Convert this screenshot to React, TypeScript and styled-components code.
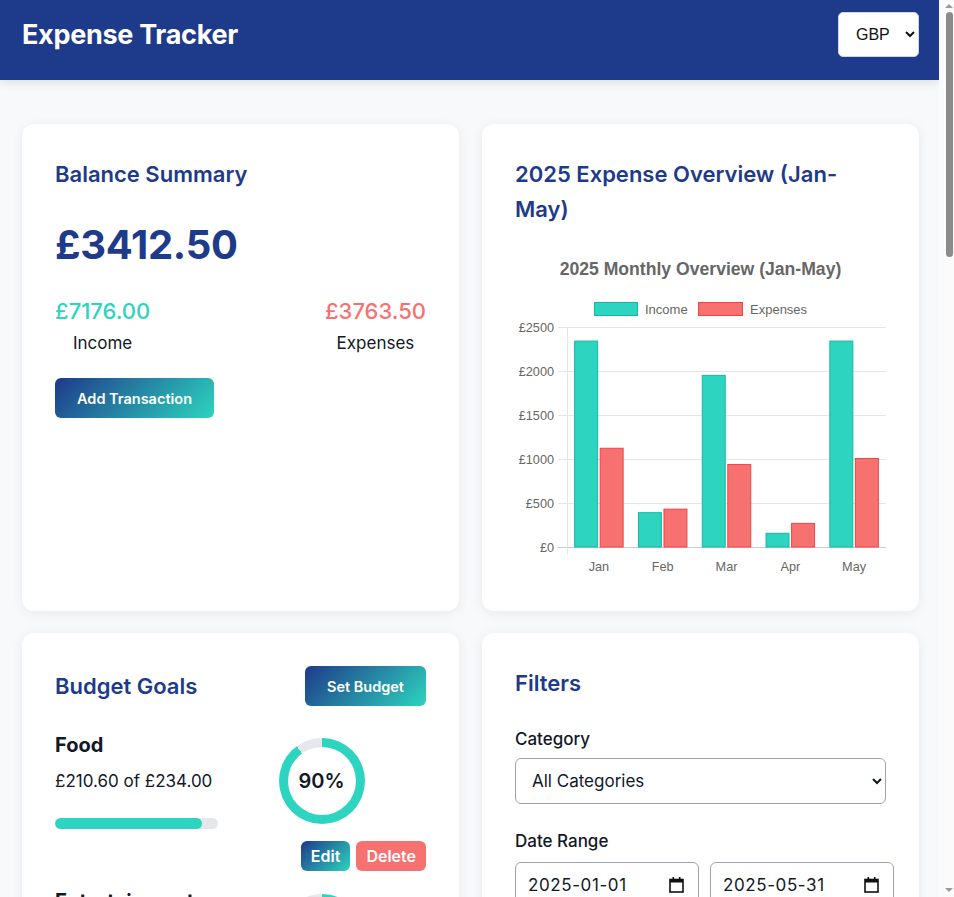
import React from 'react';
import styled, { createGlobalStyle } from 'styled-components';

const GlobalStyle = createGlobalStyle`
  * {
    box-sizing: border-box;
  }
  body {
    margin: 0;
    font-family: Inter, 'Noto Sans', sans-serif;
    background: #f8f9fb;
    color: #111827;
  }
`;

const Page = styled.div`
  margin-right: 15px;
`;

/* the reference shows a classic scrollbar; the capture hides native ones */
const ScrollBar = styled.div`
  position: fixed;
  top: 0;
  right: 0;
  width: 15px;
  height: 100vh;
  background: #fbfbfb;
`;

const ScrollThumb = styled.div`
  position: absolute;
  top: 12px;
  left: 7px;
  width: 7px;
  height: 245px;
  border-radius: 4px;
  background: #8b8b8b;
`;

const ScrollArrow = styled.div<{ $down?: boolean }>`
  position: absolute;
  left: 6px;
  ${(p) => (p.$down ? 'bottom: 5px;' : 'top: 4px;')}
  width: 0;
  height: 0;
  border-left: 4px solid transparent;
  border-right: 4px solid transparent;
  ${(p) => (p.$down ? 'border-top: 4px solid #9a9a9a;' : 'border-bottom: 4px solid #9a9a9a;')}
`;

const Header = styled.header`
  background: #1e3a8a;
  height: 80px;
  padding: 12px 20px 23px 22px;
  display: flex;
  justify-content: space-between;
  align-items: center;
  box-shadow: 0 2px 10px rgba(0, 0, 0, 0.12);
`;

const Logo = styled.h1`
  margin: 0;
  color: #ffffff;
  font-size: 27px;
  font-weight: 700;
  letter-spacing: -0.3px;
`;

const CurrencySelect = styled.select`
  height: 45px;
  width: 81px;
  padding: 0 10px 0 13px;
  border: 1px solid #d1d5db;
  border-radius: 5px;
  background: #ffffff;
  font-family: 'Liberation Sans', Arial, sans-serif;
  font-size: 16px;
  color: #111;
`;

const Main = styled.main`
  display: grid;
  grid-template-columns: minmax(0, 1fr) minmax(0, 1fr);
  column-gap: 23px;
  row-gap: 22px;
  padding: 44px 20px 48px 22px;
  align-items: start;
  align-content: start;
  min-height: 3116px;
`;

const Card = styled.section<{ $span?: boolean; $height?: number }>`
  background: #ffffff;
  border-radius: 12px;
  box-shadow: 0 2px 12px rgba(15, 23, 42, 0.07);
  padding: 33px;
  grid-column: ${(p) => (p.$span ? '1 / -1' : 'auto')};
  min-height: ${(p) => (p.$height ? `${p.$height}px` : 'auto')};
`;

const CardTitle = styled.h2`
  margin: 0;
  color: #1e3a8a;
  font-size: 22px;
  font-weight: 600;
  line-height: 35px;
`;

const Balance = styled.div`
  margin: 18px 0 0;
  color: #1e3a8a;
  font-size: 40px;
  font-weight: 700;
  line-height: 70px;
  letter-spacing: -0.3px;
`;

const Totals = styled.div`
  display: flex;
  justify-content: space-between;
  margin-top: 16px;
`;

const TotalBlock = styled.div`
  text-align: center;
`;

const TotalAmount = styled.div<{ $color: string }>`
  color: ${(p) => p.$color};
  font-size: 22px;
  font-weight: 500;
  line-height: 30px;
`;

const TotalLabel = styled.div`
  font-size: 17px;
  line-height: 34px;
  color: #111827;
`;

const GradientButton = styled.button<{ $small?: boolean }>`
  border: none;
  border-radius: 6px;
  background: linear-gradient(135deg, #1e3a8a, #2dd4bf);
  color: #ffffff;
  font-family: Inter, sans-serif;
  font-weight: 600;
  font-size: ${(p) => (p.$small ? '16px' : '14.5px')};
  height: ${(p) => (p.$small ? '30px' : '40px')};
  padding: ${(p) => (p.$small ? '0 10px' : '0 22px')};
  cursor: pointer;
`;

const AddButton = styled(GradientButton)`
  margin-top: 18px;
`;

const DangerButton = styled.button`
  border: none;
  border-radius: 6px;
  background: #f87171;
  color: #ffffff;
  font-family: Inter, sans-serif;
  font-weight: 600;
  font-size: 16px;
  height: 30px;
  padding: 0 10px;
`;

const ChartWrap = styled.div`
  margin-top: 10px;

  svg {
    display: block;
  }
`;

const CardHead = styled.div`
  display: flex;
  justify-content: space-between;
  align-items: center;
  height: 40px;
`;

const BudgetItem = styled.div`
  display: flex;
  flex-wrap: wrap;
  align-items: center;
  margin-top: 27px;

  & + & {
    margin-top: 18px;
  }
`;

const BudgetInfo = styled.div`
  width: 60%;
`;

const BudgetName = styled.div`
  font-size: 20px;
  font-weight: 700;
  line-height: 24px;
`;

const BudgetAmount = styled.div`
  font-size: 17px;
  line-height: 24px;
  margin-top: 12px;
`;

const Track = styled.div`
  width: 163px;
  height: 11px;
  border-radius: 6px;
  background: #e5e7eb;
  margin-top: 25px;
  overflow: hidden;
`;

const Fill = styled.div`
  height: 100%;
  border-radius: 6px;
  background: #2dd4bf;
`;

const Ring = styled.div`
  width: 86px;
  height: 86px;
  margin-left: 1px;
  border-radius: 50%;
  display: flex;
  align-items: center;
  justify-content: center;
`;

const RingInner = styled.div`
  width: 68px;
  height: 68px;
  border-radius: 50%;
  background: #ffffff;
  display: flex;
  align-items: center;
  justify-content: center;
  font-size: 20px;
  font-weight: 600;
  color: #111827;
`;

const Actions = styled.div`
  width: 100%;
  display: flex;
  justify-content: flex-end;
  gap: 6px;
  margin-top: 12px;
`;

const FieldLabel = styled.label<{ $first?: boolean }>`
  display: block;
  font-size: 17px;
  font-weight: 500;
  line-height: 24px;
  margin: ${(p) => (p.$first ? '26px 0 7px' : '25px 0 9px')};
`;

const FieldSelect = styled.select`
  width: 100%;
  height: 46px;
  padding: 0 12px;
  border: 1px solid #9ca3af;
  border-radius: 6px;
  background: #ffffff;
  font-family: Inter, sans-serif;
  font-size: 17px;
  color: #111827;
`;

const DateRow = styled.div`
  display: flex;
  gap: 11px;
`;

const DateField = styled.div`
  position: relative;
  flex: none;
  width: 184px;
`;

const DateInput = styled.input`
  width: 100%;
  height: 46px;
  padding: 0 12px;
  border: 1px solid #9ca3af;
  border-radius: 6px;
  font-family: Inter, sans-serif;
  font-size: 17px;
  letter-spacing: 0.6px;
  color: #111827;
  background: #ffffff;
`;

const CalendarIcon = styled.svg`
  position: absolute;
  right: 15px;
  top: 15px;
  pointer-events: none;
`;

const TxList = styled.ul`
  list-style: none;
  margin: 20px 0 0;
  padding: 0;
`;

const TxRow = styled.li`
  display: flex;
  justify-content: space-between;
  align-items: center;
  padding: 16px 0;
  border-bottom: 1px solid #e5e7eb;
  font-size: 16px;
`;

const TxMeta = styled.div`
  color: #6b7280;
  font-size: 14px;
  margin-top: 4px;
`;

const TxValue = styled.div<{ $color: string }>`
  color: ${(p) => p.$color};
  font-weight: 600;
`;

const income = [2340, 390, 1950, 156, 2340];
const expenses = [1122, 430, 938, 268, 1005.5];
const months = ['Jan', 'Feb', 'Mar', 'Apr', 'May'];

function OverviewChart() {
  const x0 = 52;
  const x1 = 371;
  const y0 = 310;
  const scale = 220 / 2500;
  const cat = (x1 - x0) / 5;
  const slot = (cat * 0.8) / 2;
  const bw = slot * 0.9;
  const ticks = [0, 500, 1000, 1500, 2000, 2500];
  const font = "'Liberation Sans', Arial, sans-serif";
  return (
    <svg width="371" height="341" viewBox="0 0 371 341">
      <text x="185.5" y="38" textAnchor="middle" fontFamily={font} fontSize="17.6" fontWeight="700" fill="#666">
        2025 Monthly Overview (Jan-May)
      </text>
      <rect x="79.5" y="65.5" width="43" height="13" fill="#2dd4bf" stroke="#14b8a6" />
      <text x="130" y="76.5" fontFamily={font} fontSize="13" fill="#666">Income</text>
      <rect x="183.5" y="65.5" width="44" height="13" fill="#f87171" stroke="#ef4444" />
      <text x="235" y="76.5" fontFamily={font} fontSize="13" fill="#666">Expenses</text>
      {ticks.map((t) => {
        const y = y0 - t * scale + 0.5;
        return (
          <g key={t}>
            <line x1="43" x2={x1} y1={y} y2={y} stroke={t === 0 ? '#ccc' : '#e5e5e5'} />
            <text x="39" y={y + 4.5} textAnchor="end" fontFamily={font} fontSize="12.7" fill="#666">
              £{t}
            </text>
          </g>
        );
      })}
      <line x1={x0 + 0.5} x2={x0 + 0.5} y1="90" y2={y0 + 8} stroke="#e5e5e5" />
      {months.map((m, i) => {
        const start = x0 + cat * i + cat * 0.1;
        const hi = income[i] * scale;
        const he = expenses[i] * scale;
        return (
          <g key={m}>
            <rect x={start + (slot - bw) / 2} y={y0 - hi} width={bw} height={hi} fill="#2dd4bf" stroke="#14b8a6" strokeWidth="1" />
            <rect x={start + slot + (slot - bw) / 2} y={y0 - he} width={bw} height={he} fill="#f87171" stroke="#ef4444" strokeWidth="1" />
            <text x={x0 + cat * (i + 0.5)} y="333.5" textAnchor="middle" fontFamily={font} fontSize="12.7" fill="#666">
              {m}
            </text>
          </g>
        );
      })}
    </svg>
  );
}

function DatePicker({ value }: { value: string }) {
  return (
    <DateField>
      <DateInput type="text" defaultValue={value} />
      <CalendarIcon width="15" height="16" viewBox="0 0 15 16">
        <rect x="1" y="2.5" width="13" height="12.5" fill="none" stroke="#111" strokeWidth="1.6" />
        <rect x="1" y="2.5" width="13" height="3" fill="#111" />
        <rect x="3.5" y="0" width="1.6" height="3" fill="#111" />
        <rect x="9.9" y="0" width="1.6" height="3" fill="#111" />
      </CalendarIcon>
    </DateField>
  );
}

const budgets = [
  { name: 'Food', spent: 210.6, limit: 234 },
  { name: 'Entertainment', spent: 96.4, limit: 150 },
  { name: 'Transport', spent: 142.3, limit: 180 },
  { name: 'Utilities', spent: 188.9, limit: 200 },
  { name: 'Shopping', spent: 73.2, limit: 160 },
];

const transactions = [
  { title: 'Salary', date: '2025-05-28', cat: 'Income', amount: 2340, inc: true },
  { title: 'Groceries', date: '2025-05-24', cat: 'Food', amount: 84.2 },
  { title: 'Cinema tickets', date: '2025-05-20', cat: 'Entertainment', amount: 28.0 },
  { title: 'Electricity bill', date: '2025-05-15', cat: 'Utilities', amount: 96.5 },
  { title: 'Train pass', date: '2025-05-10', cat: 'Transport', amount: 62.0 },
  { title: 'Freelance project', date: '2025-04-22', cat: 'Income', amount: 156, inc: true },
  { title: 'Restaurant', date: '2025-04-18', cat: 'Food', amount: 45.8 },
  { title: 'Clothes', date: '2025-04-09', cat: 'Shopping', amount: 73.2 },
  { title: 'Water bill', date: '2025-03-30', cat: 'Utilities', amount: 38.4 },
  { title: 'Salary', date: '2025-03-28', cat: 'Income', amount: 1950, inc: true },
  { title: 'Fuel', date: '2025-03-14', cat: 'Transport', amount: 80.3 },
  { title: 'Concert', date: '2025-02-21', cat: 'Entertainment', amount: 68.4 },
];

export default function App() {
  return (
    <Page>
      <GlobalStyle />
      <Header>
        <Logo>Expense Tracker</Logo>
        <CurrencySelect defaultValue="GBP">
          <option>GBP</option>
          <option>USD</option>
          <option>EUR</option>
        </CurrencySelect>
      </Header>
      <Main>
        <Card $height={487}>
          <CardTitle>Balance Summary</CardTitle>
          <Balance>£3412.50</Balance>
          <Totals>
            <TotalBlock>
              <TotalAmount $color="#2dd4bf">£7176.00</TotalAmount>
              <TotalLabel>Income</TotalLabel>
            </TotalBlock>
            <TotalBlock>
              <TotalAmount $color="#f87171">£3763.50</TotalAmount>
              <TotalLabel>Expenses</TotalLabel>
            </TotalBlock>
          </Totals>
          <AddButton>Add Transaction</AddButton>
        </Card>
        <Card $height={487}>
          <CardTitle>2025 Expense Overview (Jan-May)</CardTitle>
          <ChartWrap>
            <OverviewChart />
          </ChartWrap>
        </Card>
        <Card>
          <CardHead>
            <CardTitle>Budget Goals</CardTitle>
            <GradientButton>Set Budget</GradientButton>
          </CardHead>
          {budgets.map((b) => {
            const pct = Math.round((b.spent / b.limit) * 100);
            return (
              <BudgetItem key={b.name}>
                <BudgetInfo>
                  <BudgetName>{b.name}</BudgetName>
                  <BudgetAmount>
                    £{b.spent.toFixed(2)} of £{b.limit.toFixed(2)}
                  </BudgetAmount>
                  <Track>
                    <Fill style={{ width: `${pct}%` }} />
                  </Track>
                </BudgetInfo>
                <Ring style={{ background: `conic-gradient(#2dd4bf 0 ${pct}%, #e5e7eb ${pct}% 100%)` }}>
                  <RingInner>{pct}%</RingInner>
                </Ring>
                <Actions>
                  <GradientButton $small>Edit</GradientButton>
                  <DangerButton>Delete</DangerButton>
                </Actions>
              </BudgetItem>
            );
          })}
        </Card>
        <Card>
          <CardTitle>Filters</CardTitle>
          <FieldLabel $first>Category</FieldLabel>
          <FieldSelect defaultValue="all">
            <option value="all">All Categories</option>
            <option>Food</option>
            <option>Entertainment</option>
            <option>Transport</option>
            <option>Utilities</option>
          </FieldSelect>
          <FieldLabel>Date Range</FieldLabel>
          <DateRow>
            <DatePicker value="2025-01-01" />
            <DatePicker value="2025-05-31" />
          </DateRow>
          <FieldLabel>Type</FieldLabel>
          <FieldSelect defaultValue="all">
            <option value="all">All Types</option>
            <option>Income</option>
            <option>Expense</option>
          </FieldSelect>
          <AddButton>Apply Filters</AddButton>
        </Card>
        <Card $span>
          <CardTitle>Recent Transactions</CardTitle>
          <TxList>
            {transactions.map((t, i) => (
              <TxRow key={i}>
                <div>
                  <div>{t.title}</div>
                  <TxMeta>
                    {t.date} · {t.cat}
                  </TxMeta>
                </div>
                <TxValue $color={t.inc ? '#2dd4bf' : '#f87171'}>
                  {t.inc ? '+' : '-'}£{t.amount.toFixed(2)}
                </TxValue>
              </TxRow>
            ))}
          </TxList>
        </Card>
      </Main>
      <ScrollBar>
        <ScrollArrow />
        <ScrollThumb />
        <ScrollArrow $down />
      </ScrollBar>
    </Page>
  );
}
